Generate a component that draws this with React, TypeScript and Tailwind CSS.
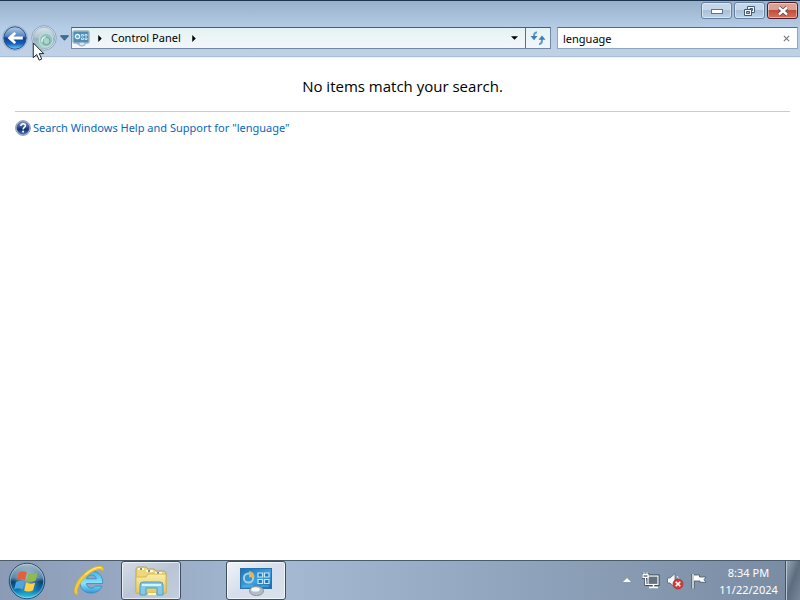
import type { ReactNode } from "react";

function BackIcon() {
  return (
    <svg viewBox="0 0 26 26" className="h-[26px] w-[26px]" aria-hidden="true">
      <defs>
        <linearGradient id="backFill" x1="0" y1="0" x2="0" y2="1">
          <stop offset="0" stopColor="#b4cce6" />
          <stop offset="0.42" stopColor="#5487c4" />
          <stop offset="0.5" stopColor="#0c3f91" />
          <stop offset="0.75" stopColor="#1560b8" />
          <stop offset="1" stopColor="#6fd4fa" />
        </linearGradient>
      </defs>
      <circle cx="13" cy="13" r="12.5" fill="#c9d9ea" stroke="#8fa6c4" strokeWidth="0.8" />
      <circle cx="13" cy="13" r="11.2" fill="url(#backFill)" stroke="#2b5390" />
      <path d="M5.5 13l6.8-6 1.8 1.8-2.6 2.7h9.3v3h-9.3l2.6 2.7-1.8 1.8z" fill="#fff" />
    </svg>
  );
}

function ForwardIcon() {
  return (
    <svg viewBox="0 0 26 26" className="h-[26px] w-[26px]" aria-hidden="true">
      <defs>
        <linearGradient id="forwardFill" x1="0" y1="0" x2="0" y2="1">
          <stop offset="0" stopColor="#d7e2ea" />
          <stop offset="0.45" stopColor="#b3c6d2" />
          <stop offset="0.55" stopColor="#93b4bc" />
          <stop offset="1" stopColor="#a8d8ce" />
        </linearGradient>
      </defs>
      <circle cx="13" cy="13" r="12.3" fill="#d5e2ee" stroke="#8498ae" strokeWidth="0.8" />
      <circle cx="13" cy="13" r="10.8" fill="url(#forwardFill)" stroke="#91a9ba" strokeWidth="0.7" />
      <circle cx="15" cy="15" r="6.8" fill="#94c4bf" stroke="#bfdcd9" strokeWidth="1.2" />
      <circle cx="15.5" cy="16" r="3.6" fill="#a9d5cd" stroke="#67a59e" strokeWidth="1" />
      <path d="M11 17a4.2 4.2 0 0 1 3.5-5" fill="none" stroke="#e3f3f0" strokeWidth="1.4" />
    </svg>
  );
}

function PanelIcon({ className }: { className: string }) {
  return (
    <svg viewBox="0 0 34 30" className={className} aria-hidden="true">
      <defs>
        <linearGradient id="panelFill" x1="0" y1="0" x2="1" y2="1">
          <stop offset="0" stopColor="#1673bd" />
          <stop offset="0.55" stopColor="#3da1df" />
          <stop offset="1" stopColor="#1767ad" />
        </linearGradient>
      </defs>
      <rect x="1.5" y="2.5" width="31" height="20" fill="url(#panelFill)" stroke="#2b72ad" />
      <circle cx="9.5" cy="12" r="4.6" fill="#3693d0" stroke="#a9cfe2" strokeWidth="2" />
      <path d="M10 11.5V5a6.5 6.5 0 0 1 5.6 6z" fill="#dfb755" />
      <path d="M19 7h4.5v4H19zM25.5 7H30v4h-4.5zM19 13.5h4.5v4H19zM25.5 13.5H30v4h-4.5z" fill="#2378bb" stroke="#c6e8f8" strokeWidth="1.2" />
      <path d="M4 20h10M22 20h8" stroke="#58b5e0" />
      <ellipse cx="17.5" cy="25" rx="7" ry="4.6" fill="#b4bcc4" stroke="#8b959e" />
      <ellipse cx="16.5" cy="23.4" rx="4.2" ry="2.2" fill="#f5f7f8" />
    </svg>
  );
}

function AddressIcon() {
  return (
    <svg viewBox="0 0 18 17" className="h-[17px] w-[18px]" aria-hidden="true">
      <rect x="1" y="1" width="16" height="12" rx="1.5" fill="#4e8fba" stroke="#9bb4c6" strokeWidth="1.4" />
      <circle cx="5.5" cy="6.5" r="2.2" fill="#68abd0" stroke="#e5f4fb" strokeWidth="1.2" />
      <path d="M9.5 4.5h2v1.5h-2zM13 4.5h2v1.5h-2zM9.5 8h2v1.5h-2zM13 8h2v1.5h-2z" fill="#3475a7" stroke="#e4f3fa" strokeWidth="0.8" />
      <path d="M4 13h10l-2 2H6z" fill="#a1b7c2" />
      <ellipse cx="10" cy="14" rx="3.2" ry="2" fill="#dce3e8" stroke="#8299a9" strokeWidth="0.8" />
    </svg>
  );
}

function RefreshIcon() {
  return (
    <svg viewBox="0 0 16 16" className="h-4 w-4" aria-hidden="true">
      <path d="M7 2.5C4.5 2.2 4 4 4 7M9 14c2.6.2 3-1.8 3-5" fill="none" stroke="#5b9bcb" strokeWidth="2" />
      <path d="M0.5 6h7L4 10.2zM8.5 9.8h7L12 5.5z" fill="#3f7fb5" />
    </svg>
  );
}

function HelpIcon() {
  return (
    <svg viewBox="0 0 16 16" className="h-4 w-4 shrink-0" aria-hidden="true">
      <defs>
        <linearGradient id="helpFill" x1="0" y1="0" x2="0" y2="1">
          <stop offset="0" stopColor="#8299c6" />
          <stop offset="0.45" stopColor="#304e91" />
          <stop offset="0.6" stopColor="#112d73" />
          <stop offset="1" stopColor="#4a76bc" />
        </linearGradient>
      </defs>
      <circle cx="8" cy="8" r="7.5" fill="#c3cddf" stroke="#8593ae" strokeWidth="0.8" />
      <circle cx="8" cy="8" r="6.2" fill="url(#helpFill)" stroke="#38558f" strokeWidth="0.6" />
      <path d="M5.8 6c0-3.1 5-2.8 4.6-.1C10.2 7.5 8.2 7.4 8.1 9.4" fill="none" stroke="#fff" strokeWidth="1.6" />
      <rect x="7.2" y="10.7" width="1.8" height="1.8" fill="#fff" />
    </svg>
  );
}

function StartIcon() {
  return (
    <svg viewBox="0 0 40 40" className="h-[38px] w-[38px]" aria-hidden="true">
      <defs>
        <linearGradient id="orbFill" x1="0" y1="0" x2="0" y2="1">
          <stop offset="0" stopColor="#a7bac8" />
          <stop offset="0.4" stopColor="#5c8aa8" />
          <stop offset="0.52" stopColor="#0b4270" />
          <stop offset="0.75" stopColor="#0873ae" />
          <stop offset="1" stopColor="#3ed5ed" />
        </linearGradient>
        <radialGradient id="orbGlow" cx="0.5" cy="0.5" r="0.5">
          <stop offset="0" stopColor="#ffffff" stopOpacity="0.5" />
          <stop offset="1" stopColor="#ffffff" stopOpacity="0" />
        </radialGradient>
      </defs>
      <circle cx="20" cy="20" r="18.7" fill="url(#orbFill)" stroke="#244c68" />
      <circle cx="20" cy="20" r="17.6" fill="none" stroke="#b9d7e4" strokeOpacity="0.6" />
      <circle cx="20" cy="20" r="14" fill="url(#orbGlow)" />
      <path d="M11 11.2q4.8-2.8 8.8-.2l-1.9 8q-4.2-2.4-9 .2z" fill="#e2603a" />
      <path d="M21.4 12.2q4 2 9.6-.6l-2.1 8.1q-5 2.4-9.5 0z" fill="#8fbb4c" />
      <path d="M8.5 21q4.8-2.6 9-.2l-2 8q-4.3-2.5-9 .1z" fill="#4ba6e3" />
      <path d="M19 21.7q4.5 2.3 9.5.1l-2.1 8q-5 2.5-9.4.1z" fill="#ffd23f" />
    </svg>
  );
}

function ExplorerEIcon() {
  return (
    <svg viewBox="0 0 34 34" className="h-[34px] w-[34px]" aria-hidden="true">
      <defs>
        <linearGradient id="browserFill" x1="0" y1="0" x2="0" y2="1">
          <stop offset="0" stopColor="#45b0e6" />
          <stop offset="0.55" stopColor="#8be3fa" />
          <stop offset="1" stopColor="#2f98d8" />
        </linearGradient>
      </defs>
      <path d="M30.5 19.5H14.5c.6 5.2 7 6 8.8 2.6h6.6C27.2 31.8 8 32.2 8 18.2 8 3.2 32 3 30.5 19.5zM14.6 14.8h9.8c-.8-5-9-5.1-9.8 0z" fill="url(#browserFill)" stroke="#2c8cc4" strokeWidth="0.8" />
      <path d="M6 30.5C-1 31.5 2.5 19 10 11.5 18.5 2.7 30-.3 31.3 4c.3 1.2 0 2.4-.6 3.4C29.6 3.2 20 6.6 13 13.5 7.2 19.3 3.8 27 6 30.5z" fill="#f2cb3a" stroke="#d8a42c" strokeWidth="0.6" />
      <path d="M13 10.8Q23 2.3 29 3.5" fill="none" stroke="#fff1a0" />
    </svg>
  );
}

function FolderIcon() {
  return (
    <svg viewBox="0 0 34 32" className="h-[32px] w-[34px]" aria-hidden="true">
      <defs>
        <linearGradient id="folderFill" x1="0" y1="0" x2="0" y2="1">
          <stop offset="0" stopColor="#faedaa" />
          <stop offset="1" stopColor="#e8c75d" />
        </linearGradient>
      </defs>
      <path d="M2 28V3.5L4 2h8l2 2h6l2 2h8l2 2v20z" fill="#eed67c" stroke="#bda354" />
      <path d="M4 4h6M12 6h7M21 8h7" stroke="#fffbe1" strokeWidth="2" />
      <path d="M6 4h2M14 6h2M23 8h2" stroke="#516f63" strokeWidth="1.5" />
      <path d="M2 12h10l2-3h18v19H2z" fill="url(#folderFill)" stroke="#d7b854" />
      <path d="M6 30V20q0-3 3-3h17q3 0 3 3v10h-6v-7H12v7z" fill="#83c9e8" stroke="#4b9ec5" />
      <path d="M8 20h19" stroke="#d8f3f8" strokeWidth="2" />
      <path d="M14 29h8" stroke="#fff9cb" strokeWidth="2" />
    </svg>
  );
}

function NetworkIcon() {
  return (
    <svg viewBox="0 0 18 18" className="h-[18px] w-[18px]" aria-hidden="true">
      <path d="M1 1.5v4h5v-4M3.5 5.5v7H6" fill="none" stroke="#3d4d5b" strokeWidth="2.6" />
      <rect x="6" y="4" width="10" height="8.5" fill="#62727f" stroke="#33424f" strokeWidth="3" />
      <rect x="6" y="4" width="10" height="8.5" fill="#62727f" stroke="#fff" strokeWidth="1.2" />
      <path d="M7 15.5h9M11.5 12.5v3" stroke="#fff" strokeWidth="1.4" />
      <path d="M1 2.5h5v3H1zM3.5 5.5v7H6" fill="#8797a5" stroke="#fff" strokeWidth="1.2" />
      <path d="M2 0.5v2.5M5 0.5v2.5" stroke="#fff" />
    </svg>
  );
}

function VolumeIcon() {
  return (
    <svg viewBox="0 0 18 18" className="h-[18px] w-[18px]" aria-hidden="true">
      <path d="M1.5 6h2.5l5-4.5v14L4 11H1.5z" fill="#f5f7f8" stroke="#586a7a" strokeWidth="0.8" />
      <path d="M11 4q2 2 2 5" fill="none" stroke="#e5ecef" />
      <circle cx="12" cy="12" r="5" fill="#d33b36" stroke="#ad2929" strokeWidth="0.7" />
      <path d="M9.7 9.7l4.6 4.6M14.3 9.7l-4.6 4.6" stroke="#fff" strokeWidth="1.6" />
    </svg>
  );
}

function FlagIcon() {
  return (
    <svg viewBox="0 0 18 18" className="h-[18px] w-[18px]" aria-hidden="true">
      <path d="M3 2v14.5" stroke="#3b4c5b" strokeWidth="3" />
      <path d="M3.5 3h6v2H16l-2 2.7 2 2.6h-6V9H3.5z" fill="#fff" stroke="#45596a" strokeWidth="0.8" />
      <path d="M3 2v14.5" stroke="#fff" strokeWidth="1.4" />
    </svg>
  );
}

function WindowButton({ label, danger, children }: { label: string; danger?: boolean; children: ReactNode }) {
  const tone = danger
    ? "border-[#4c2029] bg-linear-to-b from-[#dda194] from-45% via-[#c04e3c] via-50% to-[#d8705a]"
    : "border-[#6580a0] bg-linear-to-b from-[#c5d6e8] from-45% via-[#a9c0d9] via-50% to-[#bdd2e7]";
  return (
    <button type="button" aria-label={label} className={`flex h-[17px] w-[31px] items-center justify-center rounded-[3px] border shadow-[inset_0_0_0_1px_#ffffff70] ${tone}`}>
      {children}
    </button>
  );
}

function Taskbar() {
  const openTask = "flex h-full w-[60px] items-center justify-center rounded-[3px] border border-[#3f4e60] bg-linear-to-br shadow-[inset_0_0_0_1px_#ffffffa0]";
  return (
    <footer className="flex h-10 shrink-0 items-stretch border-t border-[#4a5b6c] bg-linear-to-r from-[#8b9bb5] via-[#a5b9d3] via-35% to-[#788ba2] text-white">
      <button type="button" aria-label="Start" className="flex w-[54px] items-center justify-center"><StartIcon /></button>
      <button type="button" aria-label="Internet Explorer" className="ml-[6px] mr-1 flex w-[57px] items-center justify-center"><ExplorerEIcon /></button>
      <button type="button" aria-label="Windows Explorer" className={`${openTask} from-[#d5dce7] via-[#b9c5d6] to-[#c4cedb]`}><FolderIcon /></button>
      <button type="button" aria-label="Control Panel" className={`${openTask} ml-[45px] from-[#f1f4f8] via-[#d5deea] to-[#d9e1ec]`}><PanelIcon className="h-[30px] w-[34px]" /></button>
      <div className="ml-auto flex items-center">
        <button type="button" aria-label="Show hidden icons" className="mr-[9px] flex h-5 w-[12px] items-center justify-center">
          <svg viewBox="0 0 8 5" className="h-[5px] w-2" aria-hidden="true"><path d="M4 0l4 4H0z" fill="#fff" /></svg>
        </button>
        <button type="button" aria-label="Network" className="mr-[6px]"><NetworkIcon /></button>
        <button type="button" aria-label="Volume muted" className="mr-[6px]"><VolumeIcon /></button>
        <button type="button" aria-label="Action Center"><FlagIcon /></button>
        <time dateTime="2024-11-22T20:34" className="flex w-[77px] flex-col items-center pl-1 leading-[17px]">
          <span>8:34 PM</span>
          <span>11/22/2024</span>
        </time>
      </div>
      <button type="button" aria-label="Show desktop" className="w-[15px] border-l border-[#435466] bg-linear-to-br from-[#9aa9b8] via-[#5d6d80] to-[#79899a] shadow-[inset_1px_0_0_#b8c4d0]" />
    </footer>
  );
}

export default function App() {
  return (
    <div className="relative flex h-screen flex-col overflow-hidden bg-white font-['Noto_Sans','Open_Sans',sans-serif] text-[11px] text-black">
      <header className="h-[57px] shrink-0 border-t border-b border-t-[#1c3450] border-b-[#a9bed5] bg-linear-to-b from-[#98b1cb] via-[#b6cde6] via-50% to-[#bfd1e6]">
        <div className="flex h-[26px] items-start justify-end gap-[2px] pr-[2px] pt-px">
          <WindowButton label="Minimize">
            <svg viewBox="0 0 12 6" className="mt-[2px] h-[6px] w-3" aria-hidden="true"><rect x="0.5" y="0.5" width="11" height="4" fill="#fff" stroke="#5c7391" /></svg>
          </WindowButton>
          <WindowButton label="Restore">
            <svg viewBox="0 0 13 12" className="h-3 w-[13px]" aria-hidden="true">
              <path d="M4.5 1.5h7v6h-7z" fill="#f5f8fb" stroke="#455a76" />
              <path d="M7 3.5h2.5v2H7z" fill="#a8bfd6" stroke="#455a76" />
              <path d="M1.5 4.5h7v6h-7z" fill="#f5f8fb" stroke="#455a76" />
              <path d="M3.5 6.5h3v2h-3z" fill="#a8bfd6" stroke="#455a76" />
            </svg>
          </WindowButton>
          <WindowButton label="Close" danger>
            <svg viewBox="0 0 12 10" className="h-[10px] w-3" aria-hidden="true">
              <path d="M2 1.5l8 7M10 1.5l-8 7" stroke="#51434a" strokeWidth="4" />
              <path d="M2 1.5l8 7M10 1.5l-8 7" stroke="#fff" strokeWidth="2.4" />
            </svg>
          </WindowButton>
        </div>
        <div className="flex h-[22px] items-center px-[2px]">
          <button type="button" aria-label="Back" className="shrink-0"><BackIcon /></button>
          <button type="button" aria-label="Forward" className="ml-[3px] shrink-0"><ForwardIcon /></button>
          <button type="button" aria-label="Recent pages" className="flex h-5 w-[14px] shrink-0 items-center justify-center">
            <svg viewBox="0 0 10 6" className="h-[6px] w-[9px]" aria-hidden="true"><path d="M0.5 0.5h9L5 5.5z" fill="#3b7496" stroke="#35556c" /></svg>
          </button>
          <nav aria-label="Address" className="flex h-[22px] min-w-0 flex-1 items-center border border-[#7389a1] border-t-[#465e77] bg-linear-to-b from-[#e5f3f2] to-[#f3f6fc]">
            <span><AddressIcon /></span>
            <svg viewBox="0 0 4 8" className="ml-2 h-[7px] w-1" aria-hidden="true"><path d="M0 0l4 4-4 4z" /></svg>
            <button type="button" className="ml-[9px] leading-5">Control Panel</button>
            <svg viewBox="0 0 4 8" className="ml-[11px] h-[7px] w-1" aria-hidden="true"><path d="M0 0l4 4-4 4z" /></svg>
            <button type="button" aria-label="Previous locations" className="ml-auto flex h-full w-[21px] items-center justify-center">
              <svg viewBox="0 0 8 4" className="h-1 w-[7px]" aria-hidden="true"><path d="M0 0h8L4 4z" /></svg>
            </button>
            <button type="button" aria-label="Refresh" className="flex h-full w-[25px] items-center justify-center border-l border-[#52718d]"><RefreshIcon /></button>
          </nav>
          <form role="search" className="ml-[6px] flex h-[22px] w-[241px] shrink-0 items-center border border-[#8fa6bd] border-t-[#536b84] bg-white">
            <input type="text" aria-label="Search Control Panel" defaultValue="lenguage" className="h-full min-w-0 flex-1 bg-transparent pl-[5px] outline-none" />
            <button type="button" aria-label="Clear search" className="flex h-full w-[22px] items-center justify-center">
              <svg viewBox="0 0 8 8" className="h-[7px] w-[7px]" aria-hidden="true"><path d="M1 1l6 6M7 1L1 7" stroke="#74787d" strokeWidth="1.3" /></svg>
            </button>
          </form>
        </div>
      </header>
      <main className="min-h-0 flex-1 border-t border-[#eef3fa] pl-[15px] pr-[10px]">
        <h1 className="pt-4 text-center font-['Open_Sans','Noto_Sans',sans-serif] text-[15px] leading-6">No items match your search.</h1>
        <hr className="mt-[13px] border-[#c9cbd0]" />
        <a href="#help" className="mt-2 inline-flex items-center gap-[2px] leading-4 text-[#0867bb]"><HelpIcon />Search Windows Help and Support for "lenguage"</a>
      </main>
      <Taskbar />
      <svg viewBox="0 0 13 21" className="pointer-events-none absolute left-8 top-[42px] h-[20px] w-[13px]" aria-hidden="true">
        <path d="M1 1v15.5l3.6-3.4 2.6 6 2.7-1.2-2.6-5.7H12z" fill="#fff" stroke="#151d27" />
      </svg>
    </div>
  );
}
